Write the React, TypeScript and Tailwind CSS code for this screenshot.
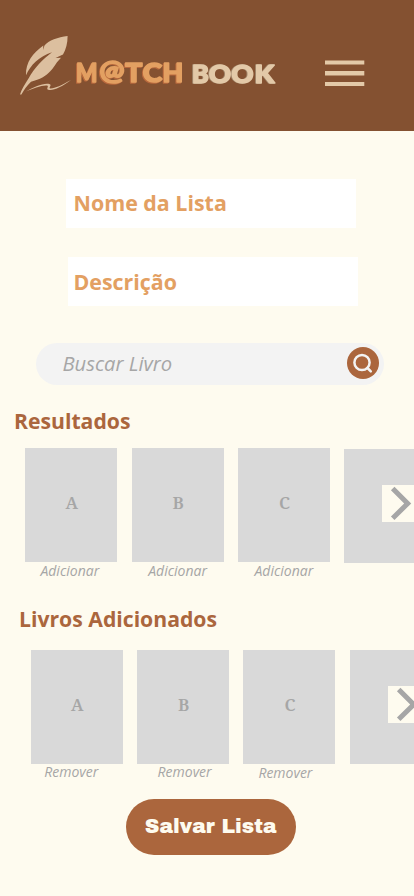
import React from 'react';

const sans = "font-['Open_Sans','Noto_Sans',sans-serif]";

const matchLetters = [
  { char: 'M', x: 76, y: 82.3, width: 21.5 },
  { char: '@', x: 99.4, y: 79.9, width: 25 },
  { char: 'T', x: 125.3, y: 82.3, width: 17.2 },
  { char: 'C', x: 142.8, y: 82.3, width: 19.5 },
  { char: 'H', x: 162.6, y: 82.3, width: 20.8 },
];

const bookLetters = [
  { char: 'B', x: 192, y: 83, width: 16.8 },
  { char: 'O', x: 209, y: 83, width: 22 },
  { char: 'O', x: 231.6, y: 83, width: 22 },
  { char: 'K', x: 254.8, y: 83, width: 19.6 },
];

function Word({ letters }: { letters: typeof matchLetters }) {
  return (
    <text>
      {letters.map((l, i) => (
        <tspan key={i} x={l.x} y={l.y} textLength={l.width} lengthAdjust="spacingAndGlyphs">{l.char}</tspan>
      ))}
    </text>
  );
}

function Logo() {
  return (
    <svg className="block" width="270" height="70" viewBox="14 30 270 70" role="img" aria-label="Match Book">
      <path d="M67.600 36C58 37 48.500 40.500 44.500 45.500L43 50l.3-4.600C33 53 25.500 62 26 75.200 30.500 65 39 56.500 52 52.200 43 59 34 68 28.500 78.500 24.500 85 21.500 89 20 94.600l1.400-.2C24 90 26.500 86 31 81.700 40 79.500 46 76 50.500 71c2.500-2.500 4.500-5.500 6.500-8.700l4-4.600-5.500.4 7.500-3.600C66 49.500 67.600 43 67.600 36z" fill="#dcbf9f" />
      <path d="M25.500 91.500C33 87.500 42 83 48.500 83.700c5 .7-1 4.600 2 4.700 5 0 11-3.200 20.500-8.400-9 6.500-16 10.300-21.500 10-5-.3.500-4-2.700-4.500-5.300-.4-14 3.500-21.300 6z" fill="#dcbf9f" />
      <g fontFamily="Lato, sans-serif" fontWeight="900" strokeLinejoin="round">
        <g fill="#e3a062" stroke="#e3a062" fontSize="26" strokeWidth="1.500" className="drop-shadow-[-1px_1px_0_#b8683c]">
          <Word letters={matchLetters} />
        </g>
        <g fill="#e3c9a8" stroke="#e3c9a8" fontSize="25" strokeWidth="1.600" className="drop-shadow-[-1px_0.500px_0_#a08468]">
          <Word letters={bookLetters} />
        </g>
      </g>
    </svg>
  );
}

function Book({ letter, action, captionClass }: { letter: string; action: string; captionClass: string }) {
  return (
    <article className="w-[92px] shrink-0">
      <div className="flex h-[114px] items-center justify-center bg-[#d9d9d9] pb-[4px] pl-px font-['Noto_Serif','Liberation_Serif',serif] text-[17px] font-semibold text-[#a6a6a6]">
        {letter}
      </div>
      <button className={`block h-[18px] w-full whitespace-nowrap text-[14px] leading-[18px] text-[#a6a6a6] italic ${captionClass}`}>
        {action}
      </button>
    </article>
  );
}

function NextCard() {
  return (
    <div className="mt-[0.800px] flex h-[114px] w-[92px] shrink-0 items-center bg-[#d9d9d9] pl-[38px]">
      <button aria-label="Próximo" className="mb-[5px] h-[37px] w-[54px] bg-[#fefbef]">
        <svg width="37" height="37" viewBox="0 0 37 37" fill="none" stroke="#a6a6a6" strokeWidth="5">
          <path d="M10.700 3.500l15 15L10.700 33.200" />
        </svg>
      </button>
    </div>
  );
}

export default function App() {
  return (
    <div className={`flex h-[896px] w-[414px] flex-col overflow-hidden bg-[#fefbef] ${sans}`}>
      <header className="flex h-[131px] shrink-0 items-start bg-[#845131] pl-[14px]">
        <div className="mt-[30px]"><Logo /></div>
        <svg role="img" aria-label="Menu" className="mt-[60px] ml-[41px]" width="40" height="27" viewBox="0 0 40 27" fill="#e3c9a8">
          <path d="M0 .5h39.300v4.100H0zM0 11h39.300v4.400H0zM0 22h39.300v4H0z" />
        </svg>
      </header>

      <div className="mt-[47.500px] ml-[65.500px] flex h-[49px] w-[290.500px] shrink-0 items-center bg-white pt-px pl-[8px] text-[21.400px] font-bold text-[#e3a062]">
        Nome da Lista
      </div>
      <div className="mt-[29px] ml-[67.500px] flex h-[49px] w-[290.500px] shrink-0 items-center bg-white pt-[3px] pl-[6px] text-[21.400px] font-bold text-[#e3a062]">
        Descrição
      </div>

      <div className="mt-[37.500px] ml-[36px] flex h-[42px] w-[348px] shrink-0 items-center justify-between rounded-full bg-[#f3f3f3] pr-[5.500px] pl-[26.500px]">
        <span className="pb-px text-[20.200px] text-[#a6a6a6] italic">Buscar Livro</span>
        <button aria-label="Buscar" className="mb-[2px] size-[32px] rounded-full bg-[#ab663d]">
          <svg width="32" height="32" viewBox="0 0 32 32" fill="none" stroke="#f3f3f3" strokeWidth="2.500" strokeLinecap="round">
            <circle cx="15" cy="15.500" r="7.600" />
            <path d="M20.500 21l3.300 3.300" />
          </svg>
        </button>
      </div>

      <h2 className="mt-[21px] ml-[14px] h-[30px] shrink-0 text-[21.200px] leading-[30px] font-bold text-[#ab663d]">Resultados</h2>
      <section className="mt-[12px] ml-[25.300px] flex h-[132px] shrink-0 gap-[14.300px]">
        <Book letter="A" action="Adicionar" captionClass="pr-[3px]" />
        <Book letter="B" action="Adicionar" captionClass="" />
        <Book letter="C" action="Adicionar" captionClass="" />
        <NextCard />
      </section>

      <h2 className="mt-[24px] ml-[19px] h-[30px] shrink-0 text-[21.200px] leading-[30px] font-bold text-[#ab663d]">Livros Adicionados</h2>
      <section className="mt-[15.600px] ml-[30.800px] flex h-[132px] shrink-0 gap-[14.300px]">
        <Book letter="A" action="Remover" captionClass="-mt-px pr-[11px]" />
        <Book letter="B" action="Remover" captionClass="-mt-px pl-[3px]" />
        <Book letter="C" action="Remover" captionClass="pr-[8px]" />
        <NextCard />
      </section>

      <button className="mt-[17.400px] ml-[126px] h-[56px] w-[169.500px] shrink-0 rounded-full bg-[#ab663d] pb-[2px] font-['Archivo_Black',Inter,sans-serif] text-[20.300px] font-normal text-[#fefbef]">
        Salvar Lista
      </button>
    </div>
  );
}
